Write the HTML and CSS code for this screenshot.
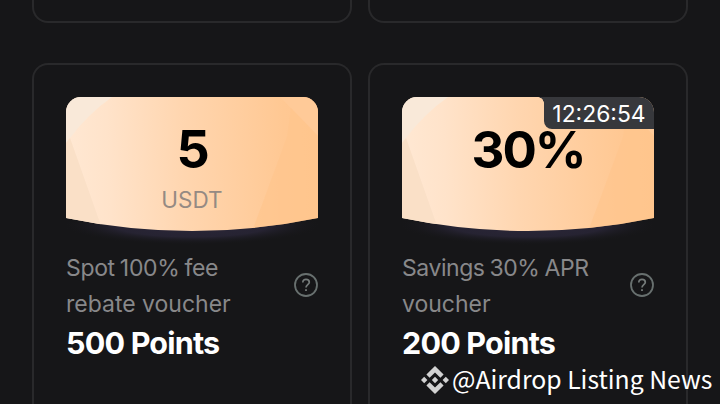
FILE: index.html
```html
<!DOCTYPE html>
<html lang="en">
<head>
<meta charset="utf-8">
<title>Points rewards</title>
<link rel="stylesheet" href="styles.css">
</head>
<body>
<svg class="defs" width="0" height="0" aria-hidden="true">
  <defs>
    <linearGradient id="peach" gradientUnits="userSpaceOnUse" x1="0" y1="10" x2="252" y2="0">
      <stop offset="0" stop-color="#ffe8d3"/>
      <stop offset="0.16" stop-color="#ffe3ca"/>
      <stop offset="0.45" stop-color="#ffd6b0"/>
      <stop offset="0.86" stop-color="#ffc893"/>
      <stop offset="1" stop-color="#ffc68f"/>
    </linearGradient>
    <radialGradient id="glow">
      <stop offset="0" stop-color="#2b273a"/>
      <stop offset="0.6" stop-color="#262332"/>
      <stop offset="1" stop-color="#161618" stop-opacity="0"/>
    </radialGradient>
    <clipPath id="ticket"><path d="M0 15A15 15 0 0 1 15 0H237A15 15 0 0 1 252 15V121Q126 147 0 121Z"/></clipPath>
    <g id="voucher">
      <ellipse cx="126" cy="128" rx="130" ry="20" fill="url(#glow)"/>
      <g clip-path="url(#ticket)">
        <path d="M0 0H252V140H0Z" fill="url(#peach)"/>
        <path d="M0 0H46Q22 17 4 41L0 46Z" fill="#f9e9d9"/>
        <path d="M0 46L4 41L39 140H0Z" fill="#fae0c7"/>
        <path d="M214 0H252V39Z" fill="#ffca98"/>
        <path d="M221 40L225 11L252 39V140H184Z" fill="#ffc58c" opacity=".6"/>
      </g>
    </g>
    <g id="help">
      <circle cx="12" cy="12" r="11" fill="none" stroke="#68706f" stroke-width="1.8"/>
      <path d="M8.8 9.4C8.8 7.4 10.1 6.3 12 6.3S15.3 7.4 15.3 9.2C15.3 11.5 12 11.7 12 14.4" fill="none" stroke="#757b7a" stroke-width="1.7"/>
      <path d="M11.1 16.3H12.9V18.1H11.1Z" fill="#757b7a"/>
    </g>
  </defs>
</svg>
<main class="grid">
  <section class="card card-previous"></section>
  <section class="card card-previous"></section>
  <section class="card card-current">
    <div class="voucher">
      <svg class="art" width="252" height="150"><use href="#voucher"/></svg>
      <div class="amount amount-single">5</div>
      <div class="unit">USDT</div>
    </div>
    <div class="info">
      <p class="title"><span class="tight">Spot 100% fee</span><br>rebate voucher</p>
      <svg class="help" width="24" height="24"><use href="#help"/></svg>
    </div>
    <div class="points">500 Points</div>
  </section>
  <section class="card card-current">
    <div class="voucher voucher-timed">
      <svg class="art" width="252" height="150"><use href="#voucher"/></svg>
      <div class="amount">30%</div>
      <div class="timer">12:26:54</div>
    </div>
    <div class="info">
      <p class="title"><span class="tighter">Savings 30% APR</span><br>voucher</p>
      <svg class="help" width="24" height="24"><use href="#help"/></svg>
    </div>
    <div class="points">200 Points</div>
  </section>
</main>
<div class="watermark">
  <svg width="28" height="28" viewBox="0 0 28 28" fill="#d2d2d2">
    <path d="M14 0L22.6 8.6L19.4 11.8L14 6.4L8.6 11.8L5.4 8.6Z"/>
    <path d="M14 28L22.6 19.4L19.4 16.2L14 21.6L8.6 16.2L5.4 19.4Z"/>
    <path d="M14 10.8L17.2 14L14 17.2L10.8 14Z"/>
    <path d="M3.2 10.8L6.4 14L3.2 17.2L0 14Z"/>
    <path d="M24.8 10.8L28 14L24.8 17.2L21.6 14Z"/>
  </svg>
  <span>@Airdrop Listing News</span>
</div>
</body>
</html>
```
FILE: styles.css
```css
* { box-sizing: border-box; }

body {
  margin: 0;
  height: 404px;
  overflow: hidden;
  background: #161618;
  font-family: Inter, "Liberation Sans", sans-serif;
}

.defs { position: absolute; }

.grid {
  display: grid;
  grid-template-columns: 320px 320px;
  grid-template-rows: 23px 341px;
  gap: 40px 16px;
  padding: 0 32px;
}

.card {
  border: 2px solid #29292b;
  border-radius: 16px;
  padding: 32px;
}

.card-previous {
  border-top: 0;
  border-radius: 0 0 16px 16px;
  padding: 0;
}

.card-current {
  border-bottom: 0;
  border-radius: 16px 16px 0 0;
}

.voucher {
  position: relative;
  height: 153px;
  padding-top: 22px;
  text-align: center;
}

.voucher-timed {
  border-top-right-radius: 15px;
  overflow: hidden;
}

.art {
  position: absolute;
  left: 0;
  top: 0;
}

.amount {
  position: relative;
  height: 62px;
  line-height: 62px;
  font-size: 51px;
  font-weight: 650;
  letter-spacing: -2.1px;
  color: #000;
}

.amount-single { font-size: 52px; }

.unit {
  position: relative;
  line-height: 38px;
  font-size: 22.5px;
  color: #958a83;
}

.timer {
  position: absolute;
  right: 0;
  top: 0;
  width: 110px;
  height: 32px;
  border-radius: 0 0 0 8px;
  background: #37383c;
  color: #fff;
  font-size: 22.9px;
  line-height: 34px;
}

.timer::before {
  content: "";
  position: absolute;
  left: -6px;
  top: 0;
  width: 6px;
  height: 6px;
  background: radial-gradient(circle at 0 100%, transparent 5.5px, #37383c 6px);
}

.info {
  display: flex;
  justify-content: space-between;
  align-items: center;
  height: 71px;
}

.title {
  margin: 0;
  font-size: 23px;
  line-height: 36px;
  color: #88888a;
  white-space: nowrap;
}

.tight {
  word-spacing: -1px;
  letter-spacing: -0.35px;
}

.tighter {
  word-spacing: -1px;
  letter-spacing: -0.45px;
}

.help {
  flex: none;
  margin-bottom: 2px;
}

.points {
  height: 42px;
  line-height: 44px;
  font-size: 30.5px;
  font-weight: 650;
  color: #fff;
  letter-spacing: -0.8px;
}

.watermark {
  position: absolute;
  left: 421px;
  top: 362px;
  display: flex;
  align-items: center;
  gap: 3px;
  height: 36px;
  color: #fff;
  font: 24.75px/34px "Noto Sans CJK SC", sans-serif;
  white-space: nowrap;
}

.watermark span {
  height: 38px;
}
```
